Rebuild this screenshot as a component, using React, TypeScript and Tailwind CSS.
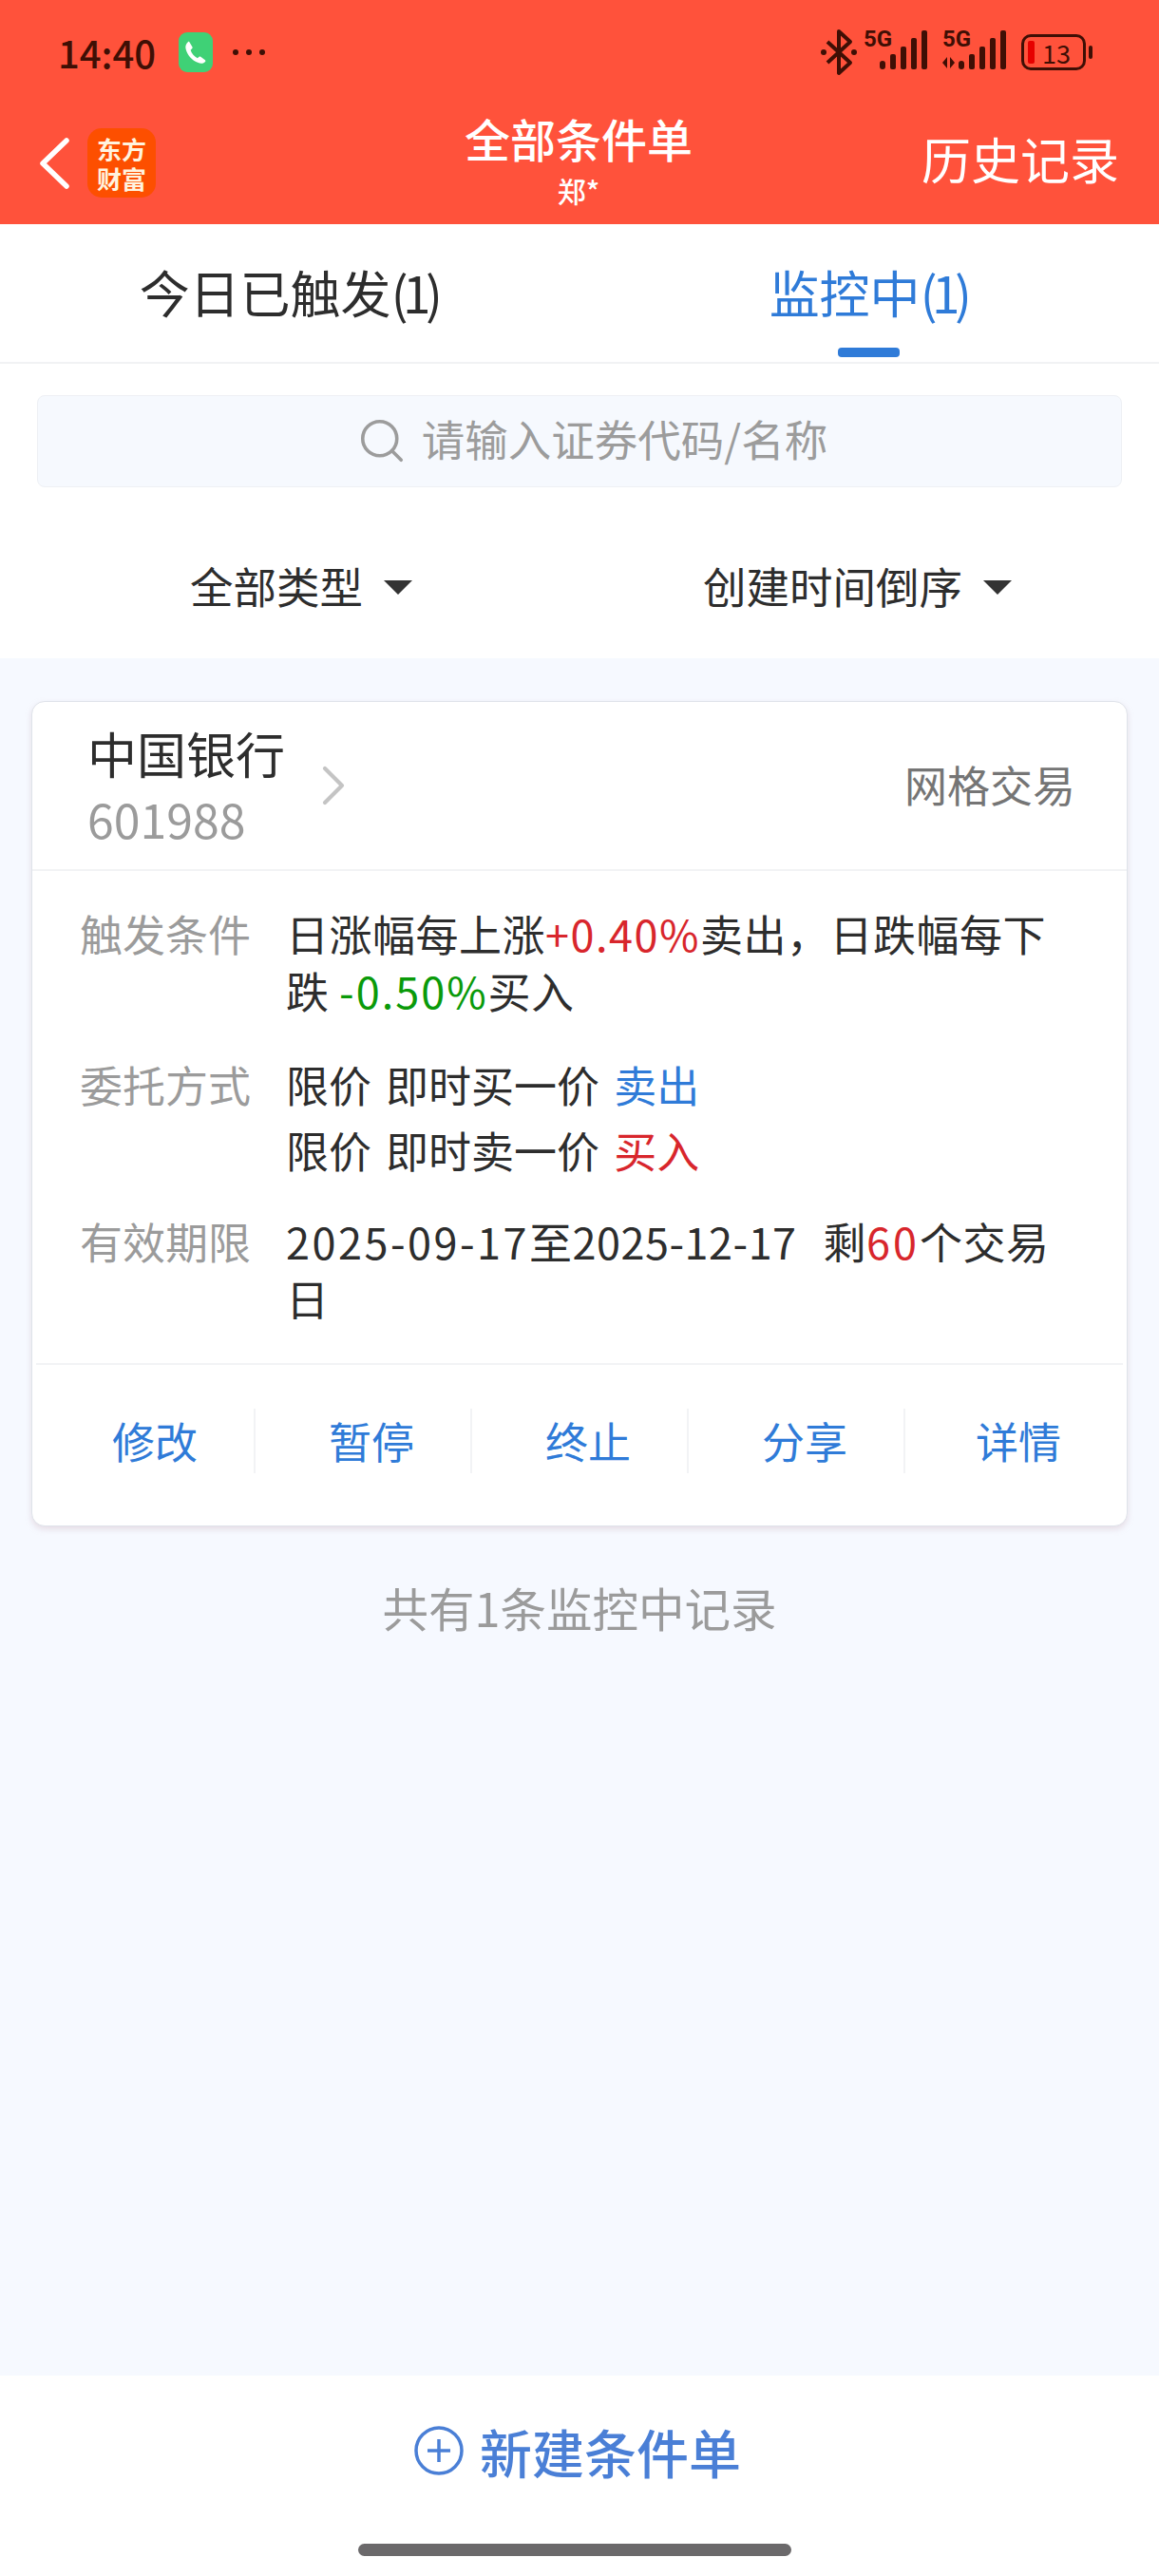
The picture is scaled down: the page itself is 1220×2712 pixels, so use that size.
import { Search, ChevronRight } from 'lucide-react';

const FONT = 'font-["Noto_Sans_CJK_SC","Noto_Sans",sans-serif]';

function Signal({ withArrows = false }: { withArrows?: boolean }) {
  return (
    <div className="relative h-[44px] w-[70px] shrink-0">
      <span className="absolute left-[2px] top-[-2px] text-[24px] font-bold leading-[26px] text-[#3f0f05] font-['Roboto',sans-serif]">5G</span>
      <svg viewBox="0 0 70 44" className="h-[44px] w-[70px]" fill="#3f0f05">
        {withArrows && <path d="M7 30v12l-5-6zM10 42V30l5 6z" />}
        <rect x="19" y="34" width="6" height="9" rx="3" />
        <rect x="30" y="27" width="6" height="16" rx="2" />
        <rect x="41" y="19" width="6" height="24" rx="2" />
        <rect x="52" y="10" width="6" height="33" rx="2" />
        <rect x="63" y="2" width="6" height="41" rx="2" />
      </svg>
    </div>
  );
}

function StatusBar() {
  return (
    <div className="flex h-[110px] items-center justify-between pl-[61px] pr-[70px]">
      <div className="flex items-center">
        <span className="text-[40px] font-medium leading-none text-[#3f0f05]">14:40</span>
        <div className="ml-[24px] flex h-[42px] w-[36px] items-center justify-center rounded-[9px] bg-[#3fd176]">
          <svg viewBox="0 0 24 24" className="h-[28px] w-[28px]" fill="#fff">
            <path d="M6.2 2.6 9 7.2c.3.5.2 1-.2 1.4L7.4 10c.9 2.900 3 5.600 6.200 7.300l1.500-1.200c.4-.3 1-.3 1.400 0l4 3c.5.400.5 1 .1 1.400-1.700 1.700-4 2-6.300 1C8.500 19.300 4.300 14.300 3 8.700 2.500 6.500 3.300 4.300 5 2.700c.4-.4.900-.4 1.200-.1z" />
          </svg>
        </div>
        <div className="ml-[21px] flex gap-[8px]">
          <span className="h-[6px] w-[6px] rounded-full bg-[#3f0f05]" />
          <span className="h-[6px] w-[6px] rounded-full bg-[#3f0f05]" />
          <span className="h-[6px] w-[6px] rounded-full bg-[#3f0f05]" />
        </div>
      </div>
      <div className="flex items-center">
        <svg viewBox="0 0 38 50" className="h-[50px] w-[38px]" fill="none" stroke="#3f0f05" strokeWidth="4" strokeLinejoin="round">
          <path d="M7 14 31 36 19 47V3l12 11L7 36" />
          <circle cx="3" cy="25" r="3" fill="#3f0f05" stroke="none" />
          <circle cx="35" cy="25" r="3" fill="#3f0f05" stroke="none" />
        </svg>
        <div className="ml-[5px] mt-[-6px]"><Signal /></div>
        <div className="ml-[13px] mt-[-6px]"><Signal withArrows /></div>
        <div className="relative ml-[15px] flex h-[38px] w-[68px] items-center justify-center rounded-[10px] border-[3px] border-[#3f0f05]">
          <span className="absolute bottom-[4px] left-[4px] top-[4px] w-[7px] rounded-[2px] bg-[#e60000]" />
          <span className="pl-[6px] text-[27px] leading-none text-[#3f0f05]">13</span>
        </div>
        <span className="ml-[3px] h-[14px] w-[4px] rounded-full bg-[#3f0f05]" />
      </div>
    </div>
  );
}

function NavBar() {
  return (
    <div className="flex h-[126px] items-start justify-between pl-[40px] pr-[42px]">
      <div className="flex w-[300px] items-start pt-[25px]">
        <svg viewBox="0 0 34 54" className="mt-[10px] h-[54px] w-[34px] shrink-0" fill="none" stroke="#fff" strokeWidth="5.500" strokeLinecap="round" strokeLinejoin="round">
          <path d="M30 3 5 27l25 24" />
        </svg>
        <div className="ml-[18px] flex h-[73px] w-[72px] items-center justify-center rounded-[15px] bg-[#fd4f00] text-center text-[26px] font-bold leading-[31px] text-[#fff3df]">
          东方<br />财富
        </div>
      </div>
      <div className="flex flex-col items-center pt-[10px]">
        <span className="text-[48px] font-medium leading-[50px] text-white">全部条件单</span>
        <span className="mt-[12px] text-[30px] font-medium leading-[36px] text-white">郑*</span>
      </div>
      <div className="flex w-[300px] justify-end pt-[24px]">
        <span className="text-[52px] leading-[66px] text-white">历史记录</span>
      </div>
    </div>
  );
}

function Tabs() {
  return (
    <div className="grid h-[147px] grid-cols-2 border-b-2 border-[#f1f2f4] bg-white">
      <div className="flex flex-col items-center pt-[33px]">
        <span className="ml-[-3px] text-[53px] leading-[76px] text-[#2d2d2d]">今日已触发<span className="tracking-[-5.500px]">(1)</span></span>
      </div>
      <div className="flex flex-col items-center pt-[33px]">
        <span className="ml-[-3px] text-[53px] leading-[76px] text-[#2f7bd8]">监控中<span className="tracking-[-5.500px]">(1)</span></span>
        <span className="ml-[-2px] mt-[21px] h-[10px] w-[65px] rounded-[4px] bg-[#2f7bd8]" />
      </div>
    </div>
  );
}

function Toolbar() {
  return (
    <div className="bg-white">
      <div className="px-[39px] pt-[33px]">
        <div className="flex h-[97px] items-center justify-center rounded-[8px] border border-[#eef0f4] bg-[#f6f9fe] pl-[26px]">
          <Search className="mb-[2px] h-[54px] w-[54px] text-[#9c9c9c]" strokeWidth={1.6} />
          <span className="ml-[15px] pb-[6px] text-[45.500px] leading-none text-[#9c9c9c]">请输入证券代码/名称</span>
        </div>
      </div>
      <div className="grid h-[180px] grid-cols-2 pt-[74px]">
        <div className="flex h-[60px] items-center pl-[200px]">
          <span className="text-[45.500px] leading-none text-[#2d2d2d]">全部类型</span>
          <span className="ml-[22px] mt-[2px] h-0 w-0 border-x-[15px] border-t-[15px] border-x-transparent border-t-[#333]" />
        </div>
        <div className="flex h-[60px] items-center pl-[130px]">
          <span className="text-[45.500px] leading-none text-[#2d2d2d]">创建时间倒序</span>
          <span className="ml-[22px] mt-[2px] h-0 w-0 border-x-[15px] border-t-[15px] border-x-transparent border-t-[#333]" />
        </div>
      </div>
    </div>
  );
}

function Row({ label, children, className }: { label: string; children: React.ReactNode; className?: string }) {
  return (
    <div className={`flex ${className ?? ''}`}>
      <span className="w-[267px] shrink-0 pl-[50px] text-[#9b9b9b]">{label}</span>
      <div className="w-[830px] whitespace-nowrap text-[#2d2d2d]">{children}</div>
    </div>
  );
}

function OrderCard() {
  return (
    <div className="mx-[33px] mt-[45px] h-[869px] rounded-[14px] border border-[#dfe3ea] bg-white shadow-[0_3px_6px_rgba(200,170,180,0.35)]">
      <div className="flex h-[178px] items-center justify-between border-b-2 border-[#f2f3f5] pl-[58px] pr-[54px]">
        <div className="flex items-center">
          <div className="flex flex-col">
            <span className="text-[52px] leading-[68px] text-[#2d2d2d]">中国银行</span>
            <span className="text-[50px] leading-[68px] text-[#9b9b9b]">601988</span>
          </div>
          <ChevronRight className="ml-[15px] h-[72px] w-[72px] text-[#c4c4c4]" strokeWidth={1.4} />
        </div>
        <span className="pb-[4px] text-[45px] leading-none text-[#757575]">网格交易</span>
      </div>
      <div className="pt-[36px] text-[45px] leading-[60px]">
        <Row label="触发条件">
          <div className="tracking-[0.500px]">日涨幅每上涨<span className="tracking-[1.500px] text-[#d8262c]">+0.40%</span>卖出，日跌幅每下</div>
          <div className="tracking-[0.500px]">跌 <span className="tracking-[2px] text-[#0a9a0a]">-0.50%</span>买入</div>
        </Row>
        <Row label="委托方式" className="mt-[34px] leading-[69px]">
          <div className="[word-spacing:5px]">限价 即时买一价 <span className="text-[#2f7bd8]">卖出</span></div>
          <div className="[word-spacing:5px]">限价 即时卖一价 <span className="text-[#d8262c]">买入</span></div>
        </Row>
        <Row label="有效期限" className="mt-[32px]">
          <div className="tracking-[0.500px]">
            <span className="tracking-[2.500px]">2025-09-17</span>至<span className="tracking-[0.500px]">2025-12-17</span><span className="ml-[28px]">剩</span><span className="tracking-[3px] text-[#d8262c]">60</span>个交易
          </div>
          <div>日</div>
        </Row>
      </div>
      <div className="mx-[4px] mt-[38px] flex h-[165px] items-center border-t-2 border-[#f2f3f5] pb-[3px] pl-[3px]">
        {['修改', '暂停', '终止', '分享', '详情'].map((a, i) => (
          <div
            key={a}
            className={`flex h-[68px] w-[228px] items-center justify-center border-r-2 text-[45px] text-[#2f7bd8] ${i < 4 ? 'border-[#f2f3f5] pl-[18px]' : 'border-transparent pl-[12px]'}`}
          >
            {a}
          </div>
        ))}
      </div>
    </div>
  );
}

export default function App() {
  return (
    <div className={`flex h-[2712px] w-[1220px] flex-col overflow-hidden bg-[#f6f9ff] ${FONT}`}>
      <div className="bg-[#ff523b]">
        <StatusBar />
        <NavBar />
      </div>
      <Tabs />
      <Toolbar />
      <main className="flex-1">
        <OrderCard />
        <p className="mt-[55px] text-center text-[48.500px] leading-[60px] text-[#9b9b9b]">共有1条监控中记录</p>
      </main>
      <div className="flex h-[211px] flex-col bg-white">
        <div className="ml-[436px] mt-[43px] flex h-[72px] items-center text-[#4a7fd6]">
          <svg viewBox="0 0 52 60" className="h-[60px] w-[52px]" fill="none" stroke="currentColor" strokeWidth="3.500">
            <circle cx="26" cy="30" r="24" />
            <path d="M26 18v24M14 30h24" />
          </svg>
          <span className="ml-[17px] text-[55px] font-medium leading-none">新建条件单</span>
        </div>
        <span className="ml-[377px] mt-[62px] h-[13px] w-[456px] rounded-full bg-[#6b696b]" />
      </div>
    </div>
  );
}
